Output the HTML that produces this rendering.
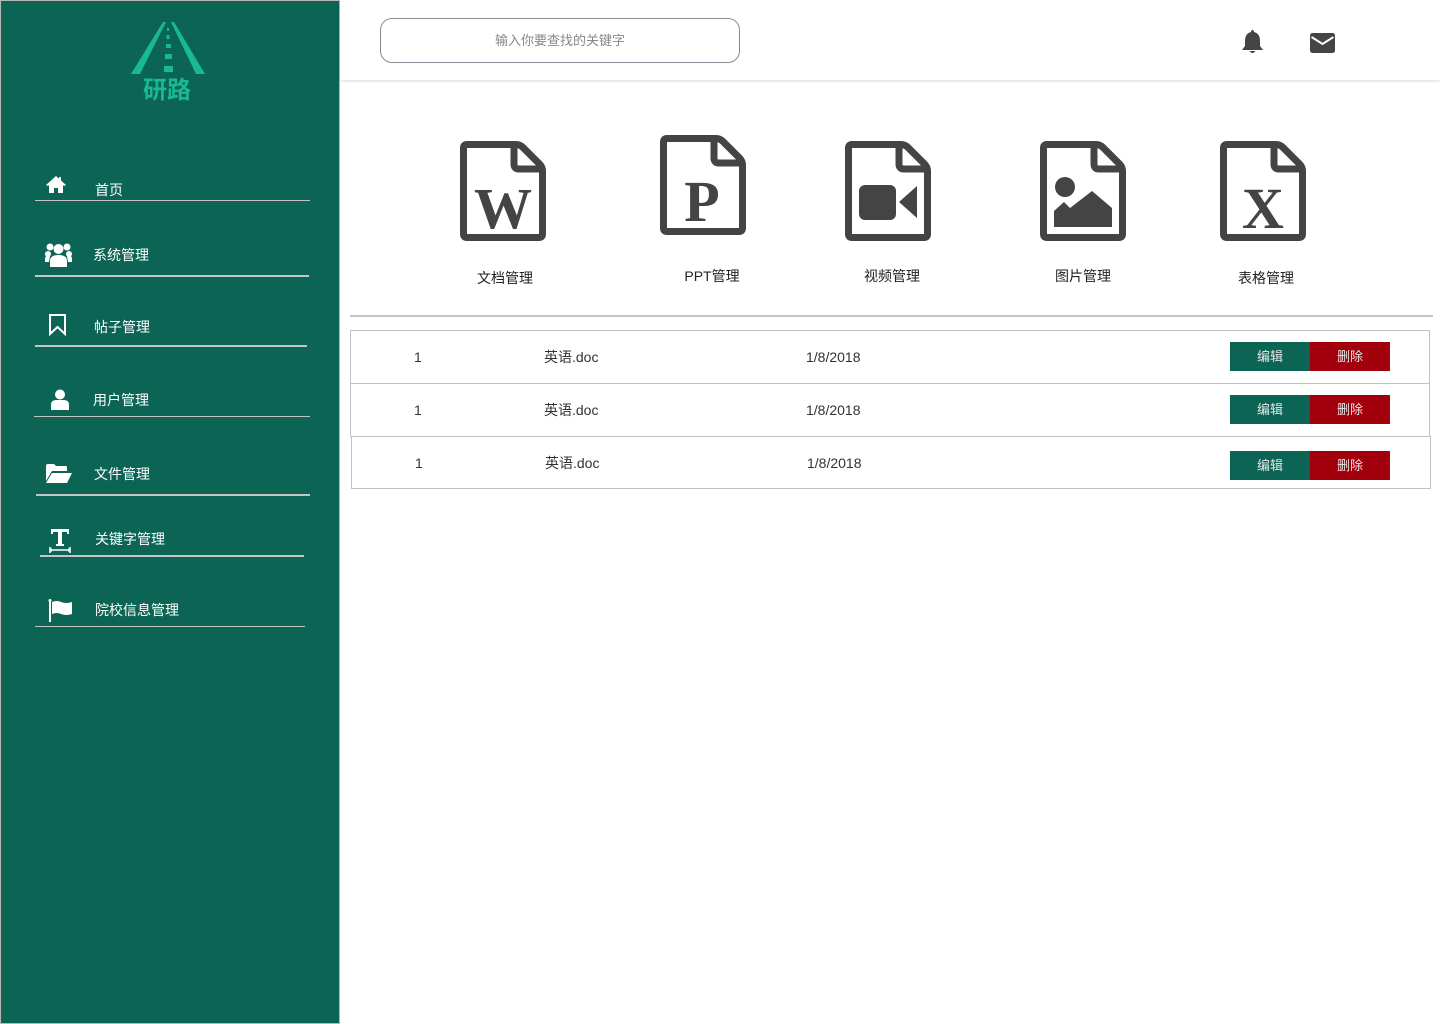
<!DOCTYPE html>
<html><head><meta charset="utf-8"><style>
*{margin:0;padding:0;box-sizing:border-box}
body{width:1440px;height:1024px;position:relative;background:#fff;font-family:"Liberation Sans","Noto Sans CJK SC",sans-serif;overflow:hidden}
.a{position:absolute}
#side{left:0;top:0;width:340px;height:1024px;background:#0b6454;box-shadow:inset 1px 1px 0 #b8b8b8,inset -1px -1px 0 #b8b8b8}
.t{position:absolute;color:#fff;font-size:14px;line-height:16px;transform:translateY(-50%)}
.l{position:absolute;background:#c4c4c4}
.lbl{position:absolute;font-size:14px;color:#222;transform:translate(-50%,-50%);white-space:nowrap}
.row{position:absolute;height:54px;border:1px solid #c2c2c2;background:#fff;font-size:14px;color:#333}
.row span{position:absolute;top:50%;transform:translateY(-50%)}
.b1,.b2{position:absolute;top:11px;width:80px;height:29px;color:#e6e6e6;font-size:13px;text-align:center;line-height:29px}
.b1{left:879px;background:#0b6454}.b2{left:959px;background:#a3000d}
</style></head><body>
<div id="side" class="a">
<svg class="a" style="left:131px;top:20px" width="76" height="60" viewBox="0 0 76 60">
<polygon points="32,2 35,2 9,54 0,54" fill="#19b995"/>
<polygon points="40,2 43,2 74,54 65,54" fill="#19b995"/>
<rect x="36" y="8" width="2" height="3" fill="#19b995"/>
<rect x="35.5" y="15" width="3" height="4" fill="#19b995"/>
<rect x="35" y="24" width="5" height="4" fill="#19b995"/>
<rect x="34" y="34" width="7" height="5" fill="#19b995"/>
<rect x="33" y="46" width="9" height="6" fill="#19b995"/>
</svg>
<div class="a" style="left:143px;top:77px;font-size:24px;color:#19b995;line-height:28px;font-weight:bold">研路</div>

<svg class="a" style="left:45px;top:175px" width="22" height="19" viewBox="0 0 22 19"><path d="M11 1 L1 10 L3 11 L4 10 V18 H9 V13 H13 V18 H18 V10 L19 11 L21 10 L16 5.5 V2 H14 V3.8 Z" fill="#fff"/></svg>
<div class="t" style="left:95px;top:190px">首页</div><div class="l" style="left:35px;top:200px;width:275px;height:1px"></div>

<svg class="a" style="left:45px;top:242px" width="27" height="26" viewBox="0 0 27 26"><circle cx="5" cy="5" r="3.5" fill="#fff"/><circle cx="22" cy="5" r="3.5" fill="#fff"/><circle cx="13.5" cy="7" r="5" fill="#fff"/><circle cx="3" cy="12" r="3" fill="#fff"/><circle cx="24" cy="12" r="3" fill="#fff"/><path d="M5 25 V19 Q5 13 13.5 13 Q22 13 22 19 V25 Z" fill="#fff"/><path d="M0 17 Q0 13 5 14 L4 20 H0Z M27 17 Q27 13 22 14 L23 20 H27Z" fill="#fff"/></svg>
<div class="t" style="left:93px;top:255px">系统管理</div><div class="l" style="left:35px;top:275px;width:274px;height:2px"></div>

<svg class="a" style="left:48px;top:314px" width="19" height="22" viewBox="0 0 19 22"><path d="M2 1 H17 V20 L9.5 13 L2 20 Z" fill="none" stroke="#fff" stroke-width="2"/></svg>
<div class="t" style="left:94px;top:327px">帖子管理</div><div class="l" style="left:35px;top:345px;width:272px;height:2px"></div>

<svg class="a" style="left:51px;top:389px" width="18" height="22" viewBox="0 0 18 22"><circle cx="9" cy="5.5" r="5" fill="#fff"/><path d="M0 21 V16 Q0 11 5 11 H13 Q18 11 18 16 V21 Z" fill="#fff"/></svg>
<div class="t" style="left:93px;top:400px">用户管理</div><div class="l" style="left:34px;top:416px;width:276px;height:1px"></div>

<svg class="a" style="left:46px;top:464px" width="27" height="20" viewBox="0 0 27 20"><path d="M0 2 Q0 0 2 0 H8 L10 2 H20 Q21 2 21 4 V7 H6 L0 17 Z" fill="#fff"/><path d="M6 9 H26 L21 19 H0 Z" fill="#fff"/></svg>
<div class="t" style="left:94px;top:474px">文件管理</div><div class="l" style="left:36px;top:494px;width:274px;height:2px"></div>

<svg class="a" style="left:48px;top:528px" width="24" height="25" viewBox="0 0 24 25"><path d="M3 1 H21 V6 H19 V4 H14 V16 H16 V18 H8 V16 H10 V4 H5 V6 H3 Z" fill="#fff"/><path d="M2 22 H22" stroke="#fff" stroke-width="1.5"/><path d="M2 19 V25 M22 19 V25" stroke="#fff" stroke-width="1.5"/><path d="M1 22 L4 20 V24Z M23 22 L20 20 V24Z" fill="#fff"/></svg>
<div class="t" style="left:95px;top:539px">关键字管理</div><div class="l" style="left:40px;top:555px;width:264px;height:2px"></div>

<svg class="a" style="left:48px;top:599px" width="25" height="23" viewBox="0 0 25 23"><rect x="1" y="1" width="2" height="22" fill="#fff"/><circle cx="2" cy="1.5" r="1.5" fill="#fff"/><path d="M4 3 Q9 1 13 3 Q18 5 24 3 V15 Q18 17 13 15 Q9 13 4 15 Z" fill="#fff"/></svg>
<div class="t" style="left:95px;top:610px">院校信息管理</div><div class="l" style="left:35px;top:626px;width:270px;height:1px"></div>
</div>

<div class="a" style="left:340px;top:0;width:1100px;height:80px;background:#fff;box-shadow:0 1px 3px rgba(0,0,0,0.15)"></div>
<div class="a" style="left:380px;top:18px;width:360px;height:45px;border:1px solid #8a8a96;border-radius:12px;text-align:center;line-height:44px;font-size:13px;color:#888">输入你要查找的关键字</div>
<svg class="a" style="left:1240px;top:29px" width="25" height="26" viewBox="0 0 25 26"><path d="M12.5 1 Q14 1 14 3 Q20 4.5 20 12 V17 L23 21 H2 L5 17 V12 Q5 4.5 11 3 Q11 1 12.5 1Z" fill="#444"/><path d="M9.5 22 Q12.5 26 15.5 22Z" fill="#444"/></svg>
<svg class="a" style="left:1310px;top:33px" width="25" height="20" viewBox="0 0 25 20"><rect x="0" y="0" width="25" height="20" rx="2.5" fill="#444"/><path d="M1.5 4 L12.5 11 L23.5 4" fill="none" stroke="#fff" stroke-width="2"/></svg>

<svg width="0" height="0" style="position:absolute"><defs><g id="doc"><path d="M7 3.5 H56 Q60 3.5 63 6.5 L79.5 23 Q82.5 26 82.5 30 V93 Q82.5 96.5 79 96.5 H7 Q3.5 96.5 3.5 93 V7 Q3.5 3.5 7 3.5Z" fill="#fff" stroke="#444" stroke-width="7"/><path d="M54 3.5 V23 Q54 28 59 28 H82" fill="none" stroke="#444" stroke-width="7"/></g></defs></svg>

<svg class="a" style="left:460px;top:141px" width="86" height="100"><use href="#doc"/><text x="43" y="87" text-anchor="middle" font-family="Liberation Serif,serif" font-weight="bold" font-size="58" fill="#444">W</text></svg>
<svg class="a" style="left:660px;top:135px" width="86" height="100"><use href="#doc"/><text x="42" y="86" text-anchor="middle" font-family="Liberation Serif,serif" font-weight="bold" font-size="58" fill="#444">P</text></svg>
<svg class="a" style="left:845px;top:141px" width="86" height="100"><use href="#doc"/><rect x="14" y="44" width="37" height="35" rx="6" fill="#444"/><path d="M54 61 L72 45 V77Z" fill="#444"/></svg>
<svg class="a" style="left:1040px;top:141px" width="86" height="100"><use href="#doc"/><circle cx="25" cy="46" r="10" fill="#444"/><path d="M14 86 V70 L24 61 L30 67 L52 50 L72 67 V86Z" fill="#444"/></svg>
<svg class="a" style="left:1220px;top:141px" width="86" height="100"><use href="#doc"/><text x="43" y="87" text-anchor="middle" font-family="Liberation Serif,serif" font-weight="bold" font-size="58" fill="#444">X</text></svg>

<div class="lbl" style="left:505px;top:278px">文档管理</div>
<div class="lbl" style="left:712px;top:276px">PPT管理</div>
<div class="lbl" style="left:892px;top:276px">视频管理</div>
<div class="lbl" style="left:1083px;top:276px">图片管理</div>
<div class="lbl" style="left:1266px;top:278px">表格管理</div>

<div class="a" style="left:350px;top:315px;width:1083px;height:2px;background:#c4c4c4"></div>

<div class="row" style="left:350px;top:330px;width:1080px"><span style="left:63px">1</span><span style="left:193px">英语.doc</span><span style="left:455px">1/8/2018</span><div class="b1">编辑</div><div class="b2">删除</div></div>
<div class="row" style="left:350px;top:383px;width:1080px"><span style="left:63px">1</span><span style="left:193px">英语.doc</span><span style="left:455px">1/8/2018</span><div class="b1">编辑</div><div class="b2">删除</div></div>
<div class="row" style="left:351px;top:436px;width:1080px;height:53px"><span style="left:63px">1</span><span style="left:193px">英语.doc</span><span style="left:455px">1/8/2018</span><div class="b1" style="left:878px;top:14px">编辑</div><div class="b2" style="left:958px;top:14px">删除</div></div>
</body></html>
